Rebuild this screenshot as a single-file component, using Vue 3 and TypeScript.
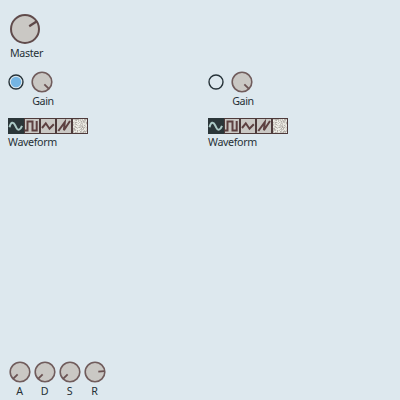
<script setup lang="ts">
interface Knob { label: string; angle: number }

const oscillators = [{ id: 1, enabled: true }, { id: 2, enabled: false }]
const envelope: Knob[] = [
  { label: 'A', angle: 225 },
  { label: 'D', angle: 225 },
  { label: 'S', angle: 225 },
  { label: 'R', angle: 85 },
]
const waves: string[] = [
  'M1.5 9.3C2.8 3.6 5.4 3.6 7 7L8.3 9.6C9.8 12.8 12.3 12.4 14 7.8',
  'M1 12.5H3.5V3.5H8.5V12.5H12.7V3',
  'M2 10L5.8 5.3L9.5 10.7L13.8 6.3',
  'M2.3 13L8.8 4.2L7.9 12.2L14 3',
]

// Deterministic speckles for the noise waveform.
const shades = ['#f0f0e9', '#cac7c2', '#b4afa9', '#deddd5', '#c5c1bb', '#e8e7df']
let seed = 71
const speckles = Array.from({ length: 196 }, (_, i) => {
  seed = (seed * 1103515245 + 12345) % 2147483648
  return { x: 1 + (i % 14), y: 1 + Math.floor(i / 14), fill: shades[Math.floor(seed / 65536) % shades.length] }
})
</script>

<template>
  <main class="synth">
    <section class="master">
      <svg class="knob-large" viewBox="0 0 30 30">
        <circle cx="15" cy="15" r="14" />
        <path d="M15 10V0.8" transform="rotate(57 15 15)" />
      </svg>
      <span class="label">Master</span>
    </section>

    <section class="oscillators">
      <div v-for="osc in oscillators" :key="osc.id" class="oscillator">
        <div class="controls">
          <svg class="toggle" viewBox="0 0 16 16">
            <circle class="ring" cx="8" cy="8" r="7" />
            <circle v-if="osc.enabled" class="dot" cx="8" cy="8" r="5.2" />
          </svg>
          <div class="gain">
            <svg class="knob" viewBox="0 0 22 22">
              <circle cx="11" cy="11" r="9.8" />
              <path d="M11 7.7V1.5" transform="rotate(135 11 11)" />
            </svg>
            <span class="label gain-label">Gain</span>
          </div>
        </div>
        <div class="waves">
          <svg v-for="(wave, i) in waves" :key="i" :class="['wave', { selected: i === 0 }]" viewBox="0 0 16 16">
            <rect x="0.5" y="0.5" width="15" height="15" />
            <path :d="wave" />
          </svg>
          <svg class="wave" viewBox="0 0 16 16">
            <rect x="0.5" y="0.5" width="15" height="15" />
            <g class="noise">
              <path v-for="(dot, i) in speckles" :key="i" :d="`M${dot.x} ${dot.y}h1v1h-1z`" :style="{ fill: dot.fill }" />
            </g>
          </svg>
        </div>
        <span class="label">Waveform</span>
      </div>
    </section>

    <section class="envelope">
      <div v-for="knob in envelope" :key="knob.label" class="stage">
        <svg class="knob" viewBox="0 0 22 22">
          <circle cx="11" cy="11" r="9.8" />
          <path d="M11 7.7V1.5" :transform="`rotate(${knob.angle} 11 11)`" />
        </svg>
        <span class="label stage-label">{{ knob.label }}</span>
      </div>
    </section>
  </main>
</template>

<style>
body { margin: 0; background: #dde8ee; }
</style>

<style scoped>
.synth {
  box-sizing: border-box;
  width: 400px;
  height: 400px;
  padding: 14px 0 2px;
  display: flex;
  flex-direction: column;
  background: #dde8ee;
  color: #263036;
  font-family: "Noto Sans", "Open Sans", sans-serif;
  font-weight: 400;
}
svg { display: block; flex: none; }
.label { display: block; font-size: 10.7px; line-height: 14px; letter-spacing: -0.35px; white-space: nowrap; }
.master { display: flex; flex-direction: column; padding-left: 10px; height: 57px; gap: 2px; }
.gain-label { letter-spacing: -0.4px; padding-left: 2px; }
.knob-large { width: 30px; height: 30px; }
.knob { width: 22px; height: 22px; }
.knob circle, .knob-large circle { fill: #cac8c4; stroke: #705c5c; stroke-width: 1.6; }
.knob-large circle { stroke: #604b4b; stroke-width: 2; }
.knob path, .knob-large path { fill: none; stroke: #6a5252; stroke-width: 1.8; }
.knob-large path { stroke: #5d4848; stroke-width: 2.2; }
.oscillators { display: flex; }
.oscillator { width: 192px; padding-left: 8px; }
.controls { display: flex; gap: 7px; height: 47px; }
.toggle { width: 16px; height: 16px; margin-top: 3px; }
.ring { fill: none; stroke: #263238; stroke-width: 1.4; }
.dot { fill: #75b5e3; }
.gain { display: flex; flex-direction: column; align-items: center; width: 22px; gap: 1px; }
.waves { display: flex; height: 17px; }
.wave { width: 16px; height: 16px; }
.wave rect { fill: #cac8c4; stroke: #4e3b3b; stroke-width: 1; }
.wave path { fill: none; stroke: #5d4040; stroke-width: 2; }
.wave .noise path { stroke: none; }
.wave.selected rect { fill: #2b3639; stroke: #2b3639; }
.wave.selected path { stroke: #acc9c6; }
.envelope { display: flex; gap: 3px; padding-left: 9px; margin-top: auto; }
.stage { display: flex; flex-direction: column; align-items: center; gap: 1px; }
.stage-label { padding-right: 1px; }
</style>
